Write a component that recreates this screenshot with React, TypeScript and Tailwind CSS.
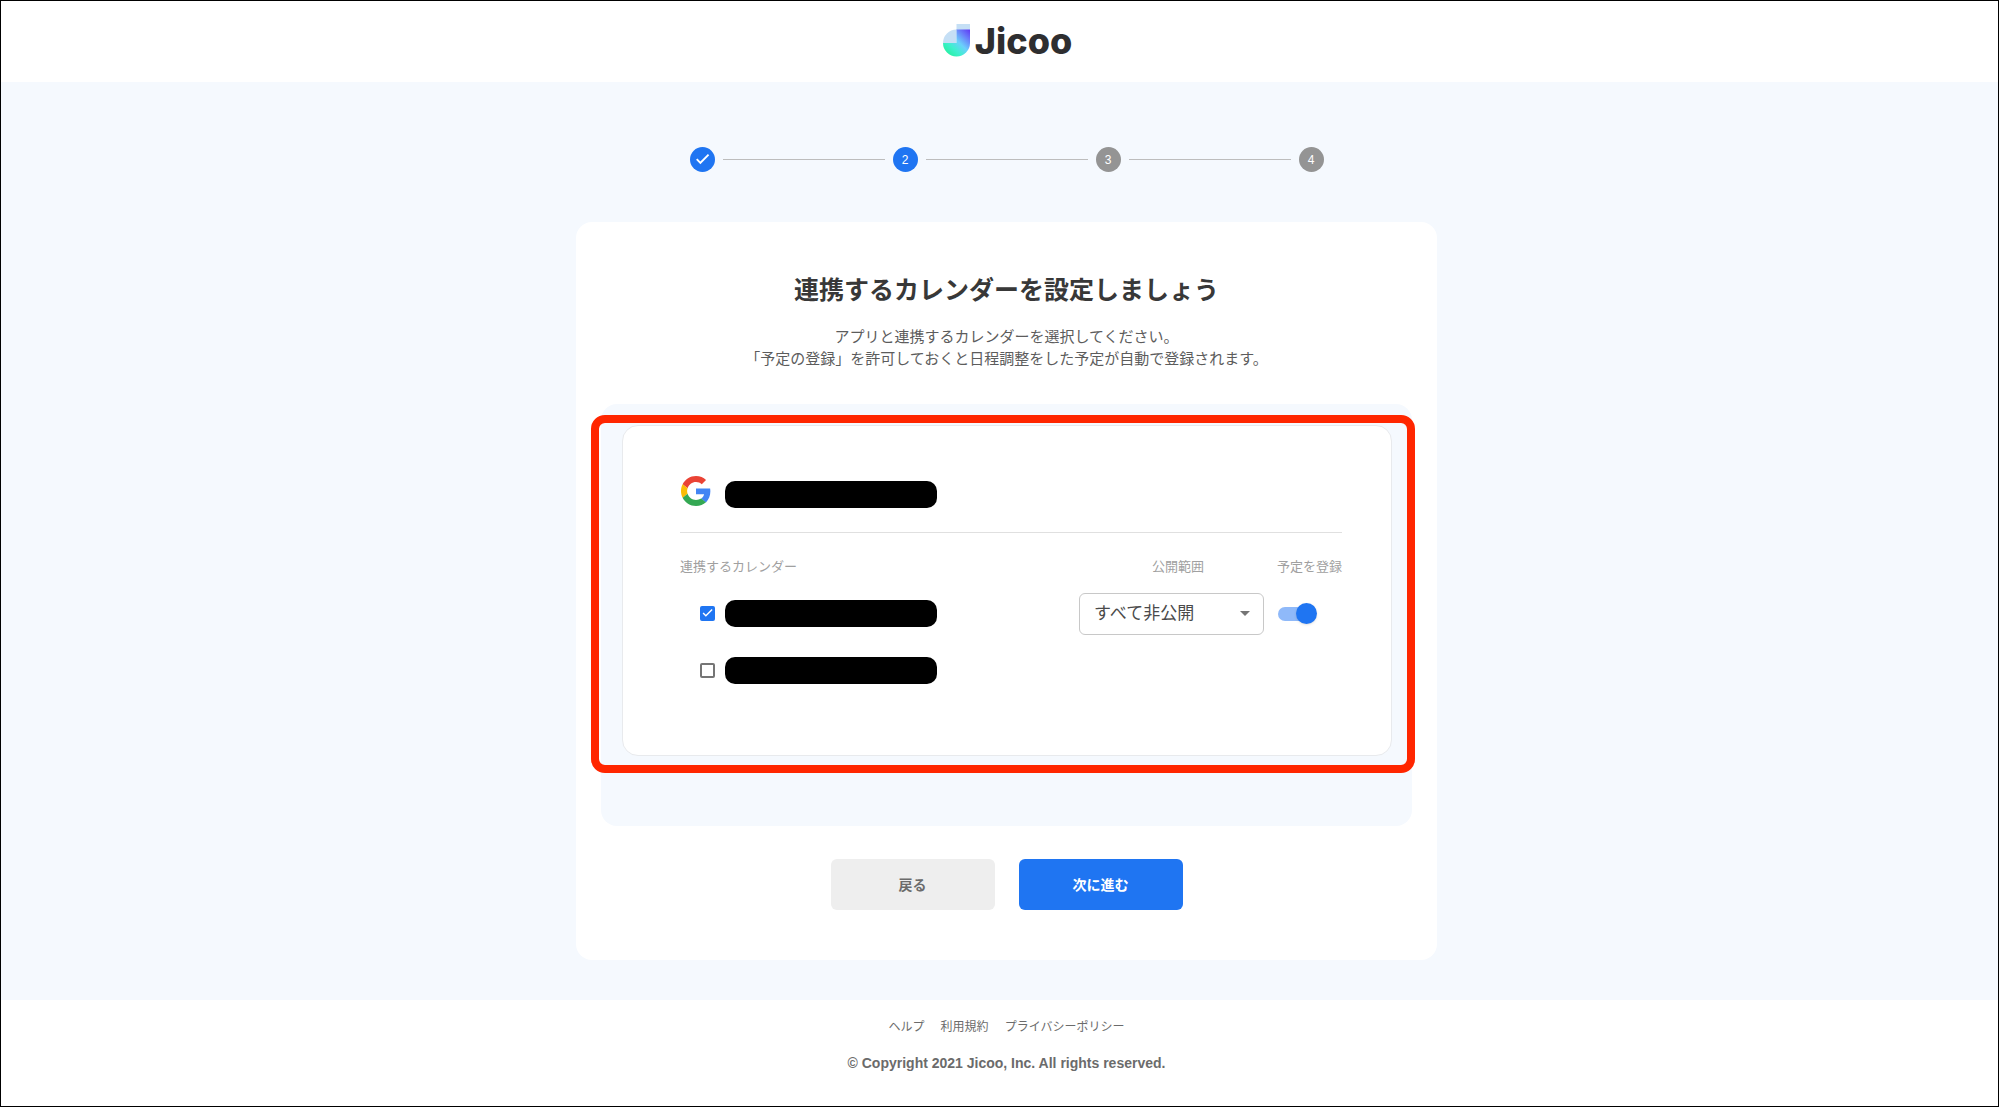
import { useState } from "react";

const steps = [1, 2, 3, 4];
const currentStep = 2;

const footerLinks = ["ヘルプ", "利用規約", "プライバシーポリシー"];

function Logo() {
  return (
    <a href="#" className="flex items-center gap-[5px] text-[#2e2e30]">
      <svg width="27" height="33" viewBox="0 0 27 33" aria-hidden="true">
        <defs>
          <linearGradient id="logoBody" x1="4" y1="29" x2="26" y2="6" gradientUnits="userSpaceOnUse">
            <stop offset="0" stopColor="#2af0a6" />
            <stop offset="0.25" stopColor="#3ff0cf" />
            <stop offset="0.5" stopColor="#6bd0fb" />
            <stop offset="0.75" stopColor="#6a86fa" />
            <stop offset="1" stopColor="#6040f5" />
          </linearGradient>
        </defs>
        <path d="M13.5 0H27V6H13.5V19H0A13.5 13.5 0 0 1 13.5 5.5Z" fill="#c5dff5" />
        <path d="M13.5 5.5H27V19A13.5 13.5 0 0 1 0 19H13.5Z" fill="url(#logoBody)" />
      </svg>
      <span className="font-['Inter',sans-serif] text-[36px] font-extrabold leading-[40px]">Jicoo</span>
    </a>
  );
}

function GoogleIcon() {
  return (
    <svg viewBox="0 0 48 48" className="mb-0.5 ml-px size-[30px]" aria-hidden="true">
      <path
        fill="#EA4335"
        d="M24 9.5c3.54 0 6.71 1.22 9.21 3.6l6.85-6.85C35.9 2.38 30.47 0 24 0 14.62 0 6.51 5.38 2.56 13.22l7.98 6.19C12.43 13.72 17.74 9.5 24 9.5z"
      />
      <path
        fill="#4285F4"
        d="M46.98 24.55c0-1.57-.15-3.09-.38-4.55H24v9.02h12.94c-.58 2.96-2.26 5.48-4.78 7.18l7.73 6c4.51-4.18 7.09-10.36 7.09-17.65z"
      />
      <path
        fill="#FBBC05"
        d="M10.53 28.59c-.48-1.45-.76-2.99-.76-4.59s.27-3.14.76-4.59l-7.98-6.19C.92 16.46 0 20.12 0 24c0 3.88.92 7.54 2.56 10.78l7.97-6.19z"
      />
      <path
        fill="#34A853"
        d="M24 48c6.48 0 11.93-2.13 15.89-5.81l-7.73-6c-2.15 1.45-4.92 2.3-8.16 2.3-6.26 0-11.57-4.22-13.47-9.91l-7.98 6.19C6.51 42.62 14.62 48 24 48z"
      />
    </svg>
  );
}

function CheckMark({ className }: { className: string }) {
  return (
    <svg viewBox="0 0 24 24" className={className} aria-hidden="true">
      <path d="M9 16.2 4.8 12l-1.9 1.9L9 20 21.5 7.5l-1.9-1.9z" fill="#fff" />
    </svg>
  );
}

function Stepper() {
  return (
    <ol className="flex w-full max-w-[634px] items-center gap-2">
      {steps.map((step) => (
        <li key={step} className={step === 1 ? "flex" : "flex flex-1 items-center gap-2"}>
          {step > 1 && <span className="h-px flex-1 bg-[#bdbdbd]" />}
          <span
            className={
              step <= currentStep
                ? "flex size-[25px] items-center justify-center rounded-full bg-[#1f75f2] text-xs text-white"
                : "flex size-[25px] items-center justify-center rounded-full bg-[#949494] text-xs text-white"
            }
          >
            {step < currentStep ? <CheckMark className="mb-0.5 size-[17px]" /> : step}
          </span>
        </li>
      ))}
    </ol>
  );
}

function Redacted() {
  return <div className="h-[27px] w-[212px] rounded-[10px] bg-black" />;
}

function CalendarRow({ name, defaultChecked }: { name: string; defaultChecked: boolean }) {
  const [checked, setChecked] = useState(defaultChecked);
  const [register, setRegister] = useState(true);

  return (
    <tr className="h-[57px]">
      <td>
        <label className="flex items-center gap-[10px] pl-5">
          <span className="relative flex size-[15px]">
            <input
              type="checkbox"
              aria-label={name}
              checked={checked}
              onChange={(e) => setChecked(e.target.checked)}
              className="size-[15px] appearance-none rounded-[2px] border-2 border-[#757575] bg-white checked:border-[#1f75f2] checked:bg-[#1f75f2]"
            />
            {checked && <CheckMark className="pointer-events-none absolute inset-0 bottom-0.5 m-auto size-[13px]" />}
          </span>
          <Redacted />
        </label>
      </td>
      <td>
        {checked && (
          <div className="relative w-[185px]">
            <select
              aria-label="公開範囲"
              className="h-[42px] w-full appearance-none rounded-[6px] border border-[#c8c8c8] bg-white pl-[14px] text-[17px] text-[#4a4a4a]"
            >
              <option>すべて非公開</option>
              <option>すべて公開</option>
            </select>
            <svg
              width="10"
              height="5"
              viewBox="0 0 10 5"
              className="pointer-events-none absolute inset-y-0 right-[14px] my-auto"
              aria-hidden="true"
            >
              <path d="M0 0h10L5 5z" fill="#757575" />
            </svg>
          </div>
        )}
      </td>
      <td>
        {checked && (
          <label className="relative flex h-[21px] w-10 items-center">
            <input
              type="checkbox"
              role="switch"
              aria-label="予定を登録"
              checked={register}
              onChange={(e) => setRegister(e.target.checked)}
              className="peer ml-px h-[14px] w-[36px] appearance-none rounded-full bg-gray-300 checked:bg-[#8fb9f9]"
            />
            <span className="pointer-events-none absolute left-0 top-0 size-[21px] rounded-full bg-white shadow peer-checked:left-auto peer-checked:right-0 peer-checked:bg-[#1f75f2]" />
          </label>
        )}
      </td>
    </tr>
  );
}

function CalendarPanel() {
  return (
    <div className="relative w-full rounded-2xl bg-[#f5f9fe] pb-[70px] pl-[21px] pr-5 pt-[21px]">
      <div className="rounded-2xl border border-[#e8eaed] bg-white pb-[56px] pl-[57px] pr-[49px] pt-[50px]">
        <div className="flex items-end gap-[14px] border-b border-[#e0e0e0] pb-6">
          <GoogleIcon />
          <Redacted />
        </div>
        <table className="mt-[15px] w-full table-fixed">
          <colgroup>
            <col />
            <col className="w-[198px]" />
            <col className="w-[65px]" />
          </colgroup>
          <thead>
            <tr className="h-[37px] whitespace-nowrap text-[13px] text-[#a0a0a0]">
              <th className="text-left font-normal">連携するカレンダー</th>
              <th className="font-normal">公開範囲</th>
              <th className="font-normal">予定を登録</th>
            </tr>
          </thead>
          <tbody>
            <CalendarRow name="カレンダー 1" defaultChecked={true} />
            <CalendarRow name="カレンダー 2" defaultChecked={false} />
          </tbody>
        </table>
      </div>
      {/* highlight frame */}
      <div className="pointer-events-none absolute -left-[10px] -right-[3px] bottom-[53px] top-[11px] rounded-[14px] border-8 border-[#ff2600]" />
    </div>
  );
}

function App() {
  return (
    <div className="flex min-h-screen flex-col border border-black bg-white font-['Liberation_Sans','Noto_Sans_CJK_JP',sans-serif]">
      <header className="flex h-[81px] items-center justify-center pb-0.5 pl-4">
        <Logo />
      </header>

      <main className="flex flex-1 flex-col items-center bg-[#f5f9fe] pb-10 pl-[14px] pt-[65px]">
        <Stepper />
        <section className="mt-[50px] flex w-full max-w-[861px] flex-col items-center rounded-2xl bg-white px-[25px] py-[50px]">
          <h1 className="text-[25px] font-bold leading-[36px] text-[#383838]">
            連携するカレンダーを設定しましょう
          </h1>
          <p className="mb-[34px] mt-[18px] text-center text-[15px] leading-[22px] text-[#5c5c5c]">
            アプリと連携するカレンダーを選択してください。
            <br />
            「予定の登録」を許可しておくと日程調整をした予定が自動で登録されます。
          </p>
          <CalendarPanel />
          <div className="mt-[33px] flex gap-6 text-sm font-bold">
            <button type="button" className="h-[51px] w-[164px] rounded-[6px] bg-[#eee] text-[#6b6b6b]">
              戻る
            </button>
            <button type="button" className="h-[51px] w-[164px] rounded-[6px] bg-[#1f75f2] text-white">
              次に進む
            </button>
          </div>
        </section>
      </main>

      <footer className="flex flex-col items-center pb-[34px] pl-[14px] pt-[18px] text-[#6b6b6b]">
        <nav className="flex gap-4 text-xs leading-[18px]">
          {footerLinks.map((link) => (
            <a key={link} href="#">
              {link}
            </a>
          ))}
        </nav>
        <p className="mt-[18px] text-sm font-bold leading-[18px]">
          © Copyright 2021 Jicoo, Inc. All rights reserved.
        </p>
      </footer>
    </div>
  );
}

export default App;
